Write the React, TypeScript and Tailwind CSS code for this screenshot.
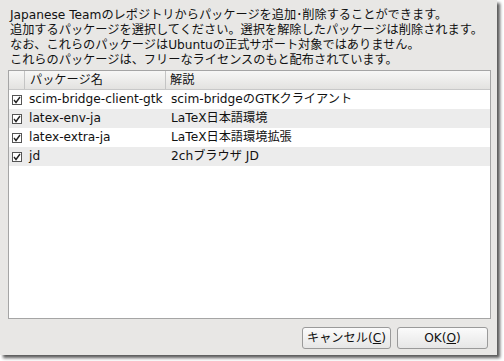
import React from "react";

const rows = [
  { name: "scim-bridge-client-gtk", desc: "scim-bridgeのGTKクライアント" },
  { name: "latex-env-ja", desc: "LaTeX日本語環境" },
  { name: "latex-extra-ja", desc: "LaTeX日本語環境拡張" },
  { name: "jd", desc: "2chブラウザ JD" },
];

function CheckBox() {
  return (
    <div className="w-[10px] h-[10px] border border-[#555] bg-white flex items-center justify-center">
      <svg width="8" height="8" viewBox="0 0 8 8">
        <path d="M1 4 L3 6.5 L7 1" stroke="#222" strokeWidth="1.4" fill="none" />
      </svg>
    </div>
  );
}

export default function App() {
  return (
    <div className="w-[504px] h-[361px] bg-white">
      <div
        className="w-[497px] h-[355px] bg-[#e8e7e5] shadow-[3px_3px_3px_rgba(0,0,0,0.65)] flex flex-col px-[8px] pt-[8px] text-[12.2px] text-[#111]"
        style={{ fontFamily: '"DejaVu Sans", "Noto Sans CJK JP", sans-serif' }}
      >
        {/* 説明文 */}
        <div className="pl-[2px] leading-[15px]">
          <p>Japanese Teamのレポジトリからパッケージを追加･削除することができます。</p>
          <p>追加するパッケージを選択してください。選択を解除したパッケージは削除されます。</p>
          <p>なお、これらのパッケージはUbuntuの正式サポート対象ではありません。</p>
          <p>これらのパッケージは、フリーなライセンスのもと配布されています。</p>
        </div>

        {/* パッケージ一覧 */}
        <div className="mt-[2px] w-[483px] h-[249px] border border-[#a5a5a5] bg-white flex flex-col">
          <div className="h-[19px] flex items-stretch bg-gradient-to-b from-[#f7f7f6] to-[#e3e2e0] border-b border-[#c8c8c8]">
            <div className="w-[16px] border-r border-[#c4c4c4]" />
            <div className="w-[141px] pl-[5px] flex items-center border-r border-[#c4c4c4]">パッケージ名</div>
            <div className="flex-1 pl-[4px] flex items-center">解説</div>
          </div>
          {rows.map((r, i) => (
            <div
              key={r.name}
              className={`h-[19px] flex items-center ${i % 2 === 1 ? "bg-[#ececec]" : "bg-white"}`}
            >
              <div className="w-[19px] pl-[3px] flex items-center">
                <CheckBox />
              </div>
              <div className="w-[142px] pl-[1px] whitespace-nowrap">{r.name}</div>
              <div className="flex-1 pl-[1px] whitespace-nowrap">{r.desc}</div>
            </div>
          ))}
        </div>

        {/* ボタン */}
        <div className="mt-[8px] flex justify-end gap-[6px] pr-[1px]">
          <button className="w-[89px] h-[22px] rounded-[3px] border border-[#9a9a9a] bg-gradient-to-b from-[#fbfbfb] to-[#e6e6e6] text-[12.2px]">
            キャンセル(<span className="underline">C</span>)
          </button>
          <button className="w-[91px] h-[22px] rounded-[3px] border border-[#9a9a9a] bg-gradient-to-b from-[#fbfbfb] to-[#e6e6e6] text-[12.2px]">
            OK(<span className="underline">O</span>)
          </button>
        </div>
      </div>
    </div>
  );
}
